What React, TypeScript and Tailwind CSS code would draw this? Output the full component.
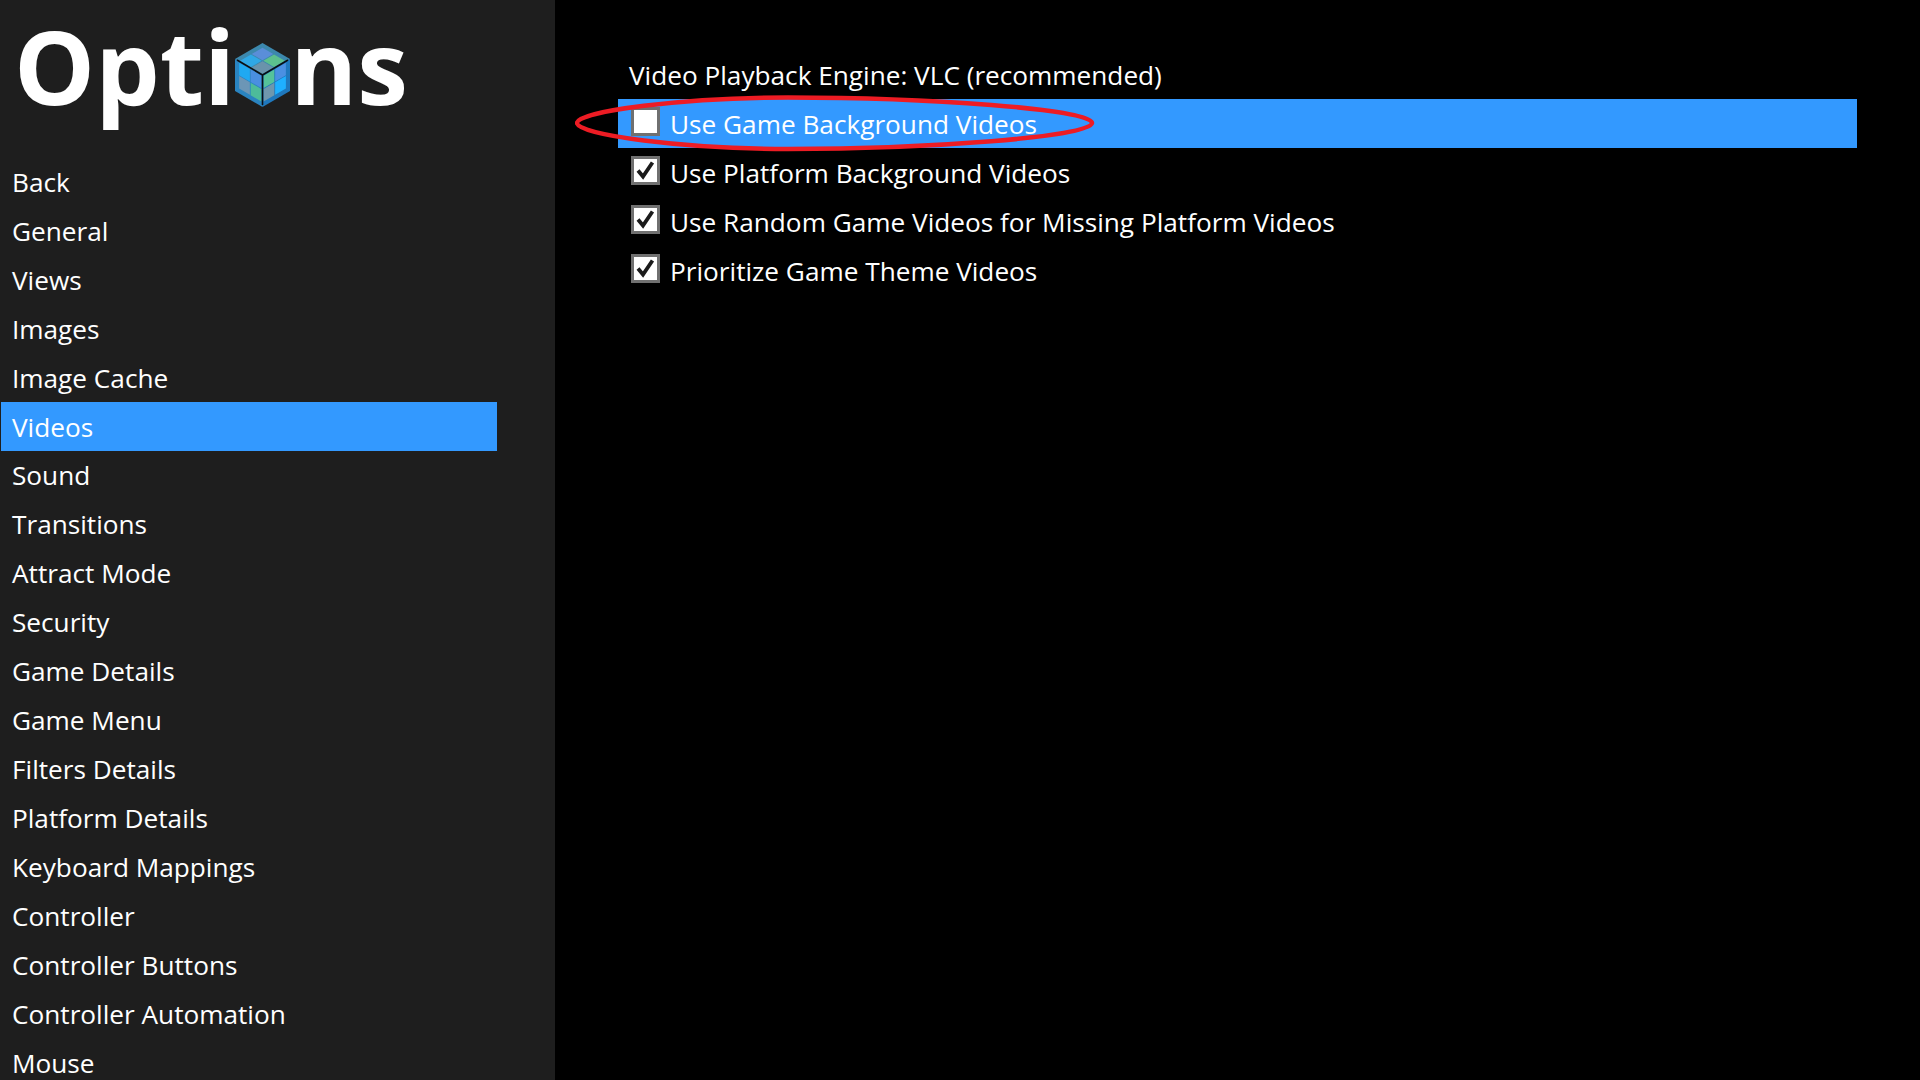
const menuItems = [
  "Back",
  "General",
  "Views",
  "Images",
  "Image Cache",
  "Videos",
  "Sound",
  "Transitions",
  "Attract Mode",
  "Security",
  "Game Details",
  "Game Menu",
  "Filters Details",
  "Platform Details",
  "Keyboard Mappings",
  "Controller",
  "Controller Buttons",
  "Controller Automation",
  "Mouse",
];

const videoOptions = [
  { label: "Use Game Background Videos", checked: false },
  { label: "Use Platform Background Videos", checked: true },
  { label: "Use Random Game Videos for Missing Platform Videos", checked: true },
  { label: "Prioritize Game Theme Videos", checked: true },
];

type Pt = [number, number];

// one face of the cube: 2x2 tiles inside a coloured frame
function CubeFace({ o, u, v, frame, tiles }: { o: Pt; u: Pt; v: Pt; frame: string; tiles: string[] }) {
  const at = (a: number, b: number) =>
    `${o[0] + u[0] * a + v[0] * b},${o[1] + u[1] * a + v[1] * b}`;
  const quad = (a0: number, b0: number, a1: number, b1: number) =>
    `${at(a0, b0)} ${at(a1, b0)} ${at(a1, b1)} ${at(a0, b1)}`;
  const cells: [number, number][] = [[0, 0], [1, 0], [0, 1], [1, 1]];
  return (
    <g>
      <polygon points={quad(0, 0, 1, 1)} fill={frame} />
      {cells.map(([i, j], n) => (
        <polygon
          key={n}
          points={quad(0.04 + i * 0.42, 0.04 + j * 0.42, 0.04 + i * 0.42 + 0.39, 0.04 + j * 0.42 + 0.39)}
          fill={tiles[n]}
        />
      ))}
    </g>
  );
}

function CubeLogo() {
  return (
    <svg viewBox="0 0 55 64" className="w-[55px] h-[64px] shrink-0">
      <CubeFace
        o={[27.5, 32]}
        u={[-27.5, -16]}
        v={[27.5, -16]}
        frame="#3c88ad"
        tiles={["#6a93ab", "#2fa8e6", "#5cc08e", "#5a8ed8"]}
      />
      <CubeFace
        o={[27.5, 32]}
        u={[-27.5, -16]}
        v={[0, 32]}
        frame="#2a84c0"
        tiles={["#4a8fe0", "#1fa9f2", "#4dbb9a", "#6c96b6"]}
      />
      <CubeFace
        o={[27.5, 32]}
        u={[27.5, -16]}
        v={[0, 32]}
        frame="#1f78bd"
        tiles={["#55c29a", "#4a90e2", "#6f97ad", "#1fb0ff"]}
      />
      <path d="M27.5 32V62M27.5 32L2 17M27.5 32L53 17" stroke="#0a0f14" strokeWidth="1.6" fill="none" />
    </svg>
  );
}

function OptionCheckbox({ checked }: { checked: boolean }) {
  return (
    <span className="w-[29px] h-[29px] mb-[6px] shrink-0 bg-white border-[3px] border-[#707070] flex items-center justify-center">
      {checked && (
        <svg viewBox="0 0 23 23" className="w-[23px] h-[23px]">
          <path d="M4 11.5L9 17.5L18.5 3.5" stroke="#1a1a1a" strokeWidth="3.8" fill="none" />
        </svg>
      )}
    </span>
  );
}

export default function App() {
  return (
    <div className="flex h-screen overflow-hidden bg-black text-white text-[26.2px] font-['Open_Sans',sans-serif]">
      {/* Sidebar */}
      <aside className="w-[555px] shrink-0 bg-[#1e1e1e] overflow-hidden">
        <div className="h-[157px] pl-[14px]">
          <div className="flex items-center text-[102px] leading-[131px] font-bold">
            <span>Opti</span>
            <span className="mt-[18px]">
              <CubeLogo />
            </span>
            <span>ns</span>
          </div>
        </div>
        <nav className="flex flex-col w-[497px] pl-[1px]">
          {menuItems.map((item) => (
            <div
              key={item}
              className={`h-[48.95px] shrink-0 pl-[11px] pt-[2px] flex items-center ${item === "Videos" ? "bg-[#3399ff]" : ""}`}
            >
              {item}
            </div>
          ))}
        </nav>
      </aside>

      {/* Options */}
      <main className="relative w-[1239px] ml-[63px] pt-[50px]">
        <div className="h-[49px] pl-[11px] pt-[2px] flex items-center">Video Playback Engine: VLC (recommended)</div>
        {videoOptions.map((opt, i) => (
          <div
            key={opt.label}
            className={`h-[49px] pl-[13px] pt-[2px] flex items-center gap-[10px] ${i === 0 ? "bg-[#3399ff]" : ""}`}
          >
            <OptionCheckbox checked={opt.checked} />
            <span>{opt.label}</span>
          </div>
        ))}
        {/* hand drawn red ring around first option */}
        <svg viewBox="0 0 520 58" className="absolute left-[-43px] top-[94px] w-[520px] h-[58px] pointer-events-none">
          <path
            d="M2 29C2 17 110 3.500 213 3.500C350 3.500 517 15 517 29C517 43 350 55 213 55C110 55 2 41 2 29Z"
            fill="none"
            stroke="#ed1c24"
            strokeWidth="4.500"
          />
        </svg>
      </main>
    </div>
  );
}
